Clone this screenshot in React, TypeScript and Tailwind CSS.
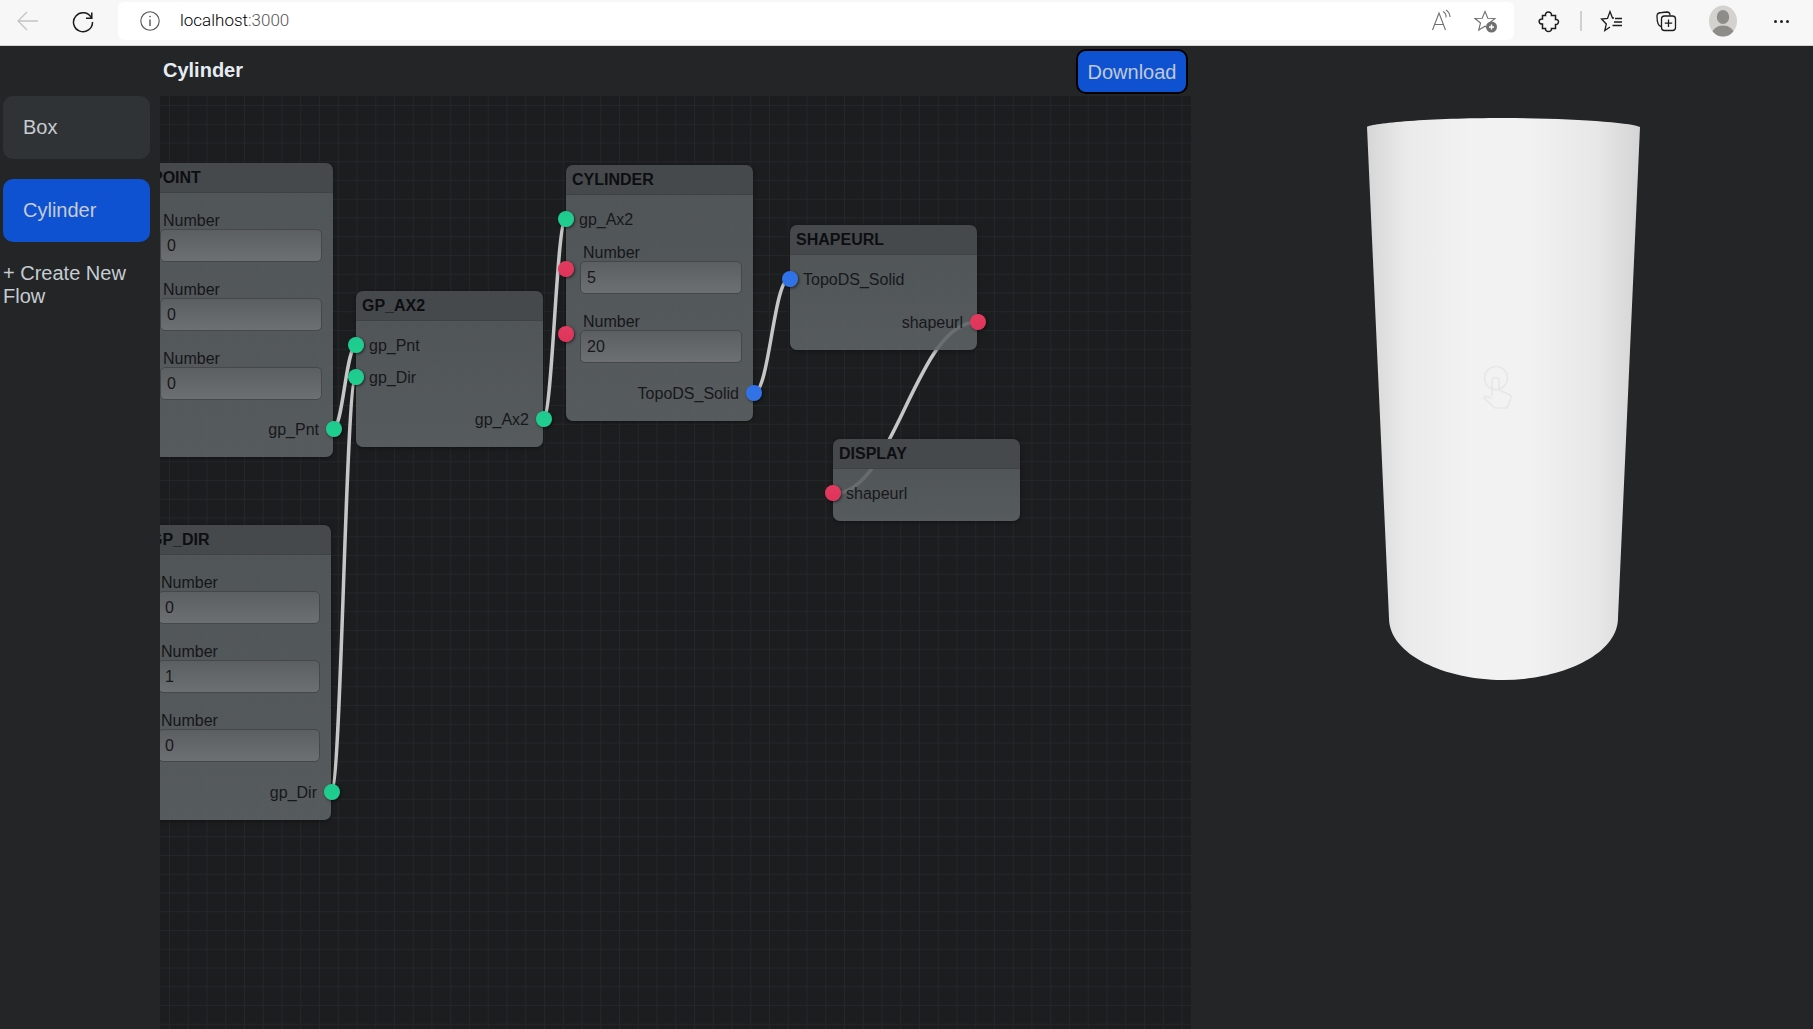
import React from 'react';

type Socket = 'green' | 'red' | 'blue';

interface Control {
  value: string;
  port?: number;
}

interface NodeData {
  title: string;
  x: number;
  y: number;
  inputs?: { label: string; socket: Socket }[];
  controls?: Control[];
  outputs?: { label: string; socket: Socket }[];
  outGap?: number;
}

const socketClass: Record<Socket, string> = {
  green: 'bg-[linear-gradient(#1fc98e,#1fd08f)]',
  red: 'bg-[linear-gradient(#e23a60,#e0345a)]',
  blue: 'bg-[linear-gradient(#2f72e8,#3273e6)]',
};

// node positions are relative to the canvas
const nodes: NodeData[] = [
  {
    title: 'POINT',
    x: -14,
    y: 67,
    controls: [{ value: '0' }, { value: '0' }, { value: '0' }],
    outputs: [{ label: 'gp_Pnt', socket: 'green' }],
    outGap: 17,
  },
  {
    title: 'GP_DIR',
    x: -16,
    y: 429,
    controls: [{ value: '0' }, { value: '1' }, { value: '0' }],
    outputs: [{ label: 'gp_Dir', socket: 'green' }],
  },
  {
    title: 'GP_AX2',
    x: 196,
    y: 195,
    inputs: [
      { label: 'gp_Pnt', socket: 'green' },
      { label: 'gp_Dir', socket: 'green' },
    ],
    outputs: [{ label: 'gp_Ax2', socket: 'green' }],
  },
  {
    title: 'CYLINDER',
    x: 406,
    y: 69,
    inputs: [{ label: 'gp_Ax2', socket: 'green' }],
    controls: [
      { value: '5', port: 18 },
      { value: '20', port: 14 },
    ],
    outputs: [{ label: 'TopoDS_Solid', socket: 'blue' }],
  },
  {
    title: 'SHAPEURL',
    x: 630,
    y: 129,
    inputs: [{ label: 'TopoDS_Solid', socket: 'blue' }],
    outputs: [{ label: 'shapeurl', socket: 'red' }],
    outGap: 19,
  },
  {
    title: 'DISPLAY',
    x: 673,
    y: 343,
    inputs: [{ label: 'shapeurl', socket: 'red' }],
  },
];

const wires = [
  [333, 429, 356, 346],
  [331, 792, 356, 377],
  [543, 419, 566, 219],
  [754, 393, 789, 279],
  [977, 322, 833, 494],
];

function wirePath([x1, y1, x2, y2]: number[]) {
  const h = (x2 - x1) * 0.43;
  return `M${x1} ${y1} C${x1 + h} ${y1} ${x2 - h} ${y2} ${x2} ${y2}`;
}

function Port({ socket, side, top }: { socket: Socket; side: 'left' | 'right'; top: number }) {
  return (
    <span
      className={`absolute w-[16px] h-[16px] rounded-full shadow-[1px_1px_3px_rgba(0,0,0,0.6)] ${socketClass[socket]} ${
        side === 'left' ? 'left-[-8px]' : 'right-[-9px]'
      }`}
      style={{ top }}
    />
  );
}

function FlowNode({ node }: { node: NodeData }) {
  return (
    <div
      className="absolute w-[187px] rounded-[7px] shadow-[0_1px_4px_rgba(0,0,0,0.4)]"
      style={{ left: node.x, top: node.y }}
    >
      <div className="h-[30px] px-[6px] flex items-center rounded-t-[7px] bg-[#45494c] border-b border-[#3f4245] text-[16px] font-bold text-[#0c0e10]">
        {node.title}
      </div>
      <div className="flex flex-col pt-[6px] pb-[16px] rounded-b-[7px] bg-[linear-gradient(rgba(88,93,96,0.88),rgba(94,99,102,0.88))]">
        {node.inputs?.map((input, i) => (
          <div
            key={input.label}
            className={`relative h-[24px] pl-[13px] pt-[2px] flex items-center text-[16px] text-[#16181a] ${i === 0 ? 'mt-[6px]' : 'mt-[8px]'}`}
          >
            <Port socket={input.socket} side="left" top={4} />
            {input.label}
          </div>
        ))}
        {node.controls?.map((control, i) => (
          <div key={i} className={`relative px-[14px] ${i === 0 ? 'mt-[12px]' : 'mt-[18px]'}`}>
            {control.port !== undefined && <Port socket="red" side="left" top={control.port} />}
            <div className="h-[18px] pl-[3px] pt-[2px] flex items-center text-[16px] text-[#141618]">Number</div>
            <input
              readOnly
              value={control.value}
              className="block w-[162px] h-[33px] px-[6px] rounded-[5px] border border-[#45484b] bg-[linear-gradient(#5b5f62,#6c7072)] text-[16px] text-[#16181a] outline-none"
            />
          </div>
        ))}
        {node.outputs?.map((output) => (
          <div
            key={output.label}
            className="relative h-[24px] pr-[14px] pt-[2px] flex items-center justify-end text-[16px] text-[#16181a]"
            style={{ marginTop: node.outGap ?? 18 }}
          >
            {output.label}
            <Port socket={output.socket} side="right" top={4} />
          </div>
        ))}
      </div>
    </div>
  );
}

function Icon({ width, children, size = 24 }: { width: number; children: React.ReactNode; size?: number }) {
  return (
    <div className="h-full shrink-0 flex items-center justify-center" style={{ width }}>
      <svg width={size} height={size} viewBox="0 0 24 24" fill="none" stroke="currentColor" strokeWidth="1.3">
        {children}
      </svg>
    </div>
  );
}

function BrowserBar() {
  return (
    <div className="h-[46px] shrink-0 flex bg-[#f7f7f7] border-b border-[#d2d2d2] pb-[5px] pt-[2px] text-[#1c1c1c]">
      <div className="w-[56px] text-[#c4c4c4]">
        <Icon width={56}>
          <path d="M22 12H2M11 3L2 12L11 21" />
        </Icon>
      </div>
      <Icon width={54}>
        <path d="M20.5 9A9.5 9.5 0 1 0 21.5 13" strokeWidth="1.5" />
        <path d="M20.8 3.5V9.3H15" strokeWidth="1.5" />
      </Icon>
      <div className="w-[8px] shrink-0" />
      <div className="w-[1396px] shrink-0 flex items-center rounded-[6px] bg-white">
        <div className="ml-[20px] text-[#555]">
          <svg width="24" height="24" viewBox="0 0 24 24" fill="none" stroke="currentColor" strokeWidth="1.1">
            <circle cx="12" cy="12" r="9.2" />
            <path d="M12 10.5V17" strokeWidth="1.4" />
            <circle cx="12" cy="7.6" r="0.8" fill="currentColor" stroke="none" />
          </svg>
        </div>
        <div className="ml-[18px] text-[17px] font-['Roboto',sans-serif] font-light text-black">
          localhost<span className="text-[#555]">:3000</span>
        </div>
        <div className="ml-auto flex h-full pr-[6px] text-[#707070]">
          <Icon width={44}>
            <path d="M2.5 21L9 4L15.5 21M4.8 15.5H13.2" strokeWidth="1.1" />
            <path d="M13 2.5a6 6 0 0 1 3 6M16 1a9 9 0 0 1 4 7" strokeWidth="1.1" />
          </Icon>
          <Icon width={44}>
            <path d="M11 2.5L13.8 9.2L21 9.5L15.5 14L17.3 21L11 17.2L4.7 21L6.5 14L1 9.5L8.2 9.2Z" strokeWidth="1.1" />
            <circle cx="17.5" cy="18" r="5.5" fill="#707070" stroke="none" />
            <path d="M17.5 15.5V20.5M15 18H20" stroke="#fff" strokeWidth="1.4" />
          </Icon>
        </div>
      </div>
      <div className="w-[12px] shrink-0" />
      <Icon width={46}>
        <path d="M8.5 6.5C7.5 2 15 1.5 14.5 6.5H18.5V10.5C22.5 9.5 22.5 16 18.5 15.5V19.5H14.5C15 23.5 8 23.5 8.5 19.5H5.5V15C1 15.5 1 9.5 5.5 10V6.5Z" strokeWidth="1.5" />
      </Icon>
      <div className="w-[2px] h-[20px] mt-[9px] ml-[8px] bg-[#d0d0d0] shrink-0" />
      <div className="ml-[-1px] flex">
        <Icon width={62}>
          <path d="M10 18L4.8 21.5L6.3 15L1.5 10L7.5 9.5L10 2.5L12.5 9H14" />
          <path d="M15 9.5H22M14 13H22M12.5 16.5H22" />
        </Icon>
        <Icon width={46}>
          <path d="M7 17.5C4 17 3 11 3 7C3 4.5 5 3.5 8 3.5L13 3C15 3 16 4.5 16 6.5" />
          <rect x="7.5" y="7" width="14" height="14.5" rx="3" />
          <path d="M14.5 10.5V18M10.8 14.2H18.2" />
        </Icon>
        <div className="w-[68px] shrink-0 h-full flex items-center justify-center">
          <svg width="28" height="32" viewBox="0 0 28 32">
            <defs>
              <clipPath id="avatar">
                <ellipse cx="14" cy="16" rx="14" ry="15.5" />
              </clipPath>
            </defs>
            <ellipse cx="14" cy="16" rx="14" ry="15.5" fill="#d3d2cf" />
            <g clipPath="url(#avatar)" fill="#8e8c89">
              <ellipse cx="14" cy="12" rx="6.2" ry="7" />
              <ellipse cx="14" cy="29" rx="11" ry="8.5" />
            </g>
          </svg>
        </div>
        <div className="w-[48px] shrink-0 h-full flex items-center justify-center gap-[3px]">
          <span className="w-[3px] h-[3px] rounded-full bg-[#222]" />
          <span className="w-[3px] h-[3px] rounded-full bg-[#222]" />
          <span className="w-[3px] h-[3px] rounded-full bg-[#222]" />
        </div>
      </div>
    </div>
  );
}

export default function App() {
  return (
    <div className="w-[1813px] h-[1029px] flex flex-col overflow-hidden bg-[#232527] font-['Liberation_Sans',Arial,sans-serif]">
      <BrowserBar />
      <div className="flex-1 min-h-0 flex">
        <aside className="w-[160px] shrink-0 pt-[50px] px-[3px] text-[20px] text-[#c6ccd2]">
          <div className="w-[147px] h-[63px] pl-[20px] pb-[2px] flex items-center rounded-[10px] bg-[#303336]">Box</div>
          <div className="w-[147px] h-[63px] mt-[20px] pl-[20px] pb-[2px] flex items-center rounded-[10px] bg-[#0f52d1]">Cylinder</div>
          <div className="mt-[20px] leading-[23px]">+ Create New Flow</div>
        </aside>
        <div className="w-[1031px] shrink-0 flex flex-col">
          <header className="h-[50px] shrink-0 pl-[3px] pr-[3px] flex items-center justify-between">
            <h1 className="mb-[2px] text-[20px] font-bold text-[#e6ecf2]">Cylinder</h1>
            <button className="w-[112px] h-[45px] pt-[1px] rounded-[10px] border-2 border-black bg-[#0f52d1] text-[20px] text-[#c0c8d4]">
              Download
            </button>
          </header>
          <div className="relative flex-1 overflow-hidden bg-[#1b1d1f] bg-[linear-gradient(#242629_1px,transparent_1px),linear-gradient(90deg,#242629_1px,transparent_1px)] bg-[size:18.75px_18.75px] bg-[position:9px_9px]">
            <svg className="absolute inset-0 w-full h-full" viewBox="160 96 1031 933" fill="none">
              {wires.map((w, i) => (
                <path key={i} d={wirePath(w)} stroke="#c6c6c6" strokeWidth="3.5" />
              ))}
            </svg>
            {nodes.map((node) => (
              <FlowNode key={node.title} node={node} />
            ))}
          </div>
        </div>
        <div className="flex-1 pl-[176px] pt-[72px]">
          <svg width="273" height="562" viewBox="1367 118 273 562">
            <defs>
              <linearGradient id="shade" x1="0" x2="1" y1="0" y2="0">
                <stop offset="0" stopColor="#d6d6d6" />
                <stop offset="0.14" stopColor="#eaeaea" />
                <stop offset="0.38" stopColor="#f2f2f2" />
                <stop offset="0.58" stopColor="#f2f2f2" />
                <stop offset="0.85" stopColor="#e7e7e7" />
                <stop offset="1" stopColor="#d4d4d4" />
              </linearGradient>
            </defs>
            <path
              d="M1367 127C1372 123 1430 118 1503 118C1576 118 1635 123 1640 127L1618 618C1618 655 1560 680 1503 680C1446 680 1389 655 1389 618Z"
              fill="url(#shade)"
            />
            <g fill="none" stroke="#e7e7e7" strokeWidth="1.6">
              <circle cx="1496" cy="378" r="11.5" />
              <path d="M1492 396V381a3.5 3.5 0 0 1 7 0V390L1509 394.5a3 3 0 0 1 2 3.5L1507 408H1495L1484 398a2.5 2.5 0 0 1 3-1.5L1492 398" />
            </g>
          </svg>
        </div>
      </div>
    </div>
  );
}
